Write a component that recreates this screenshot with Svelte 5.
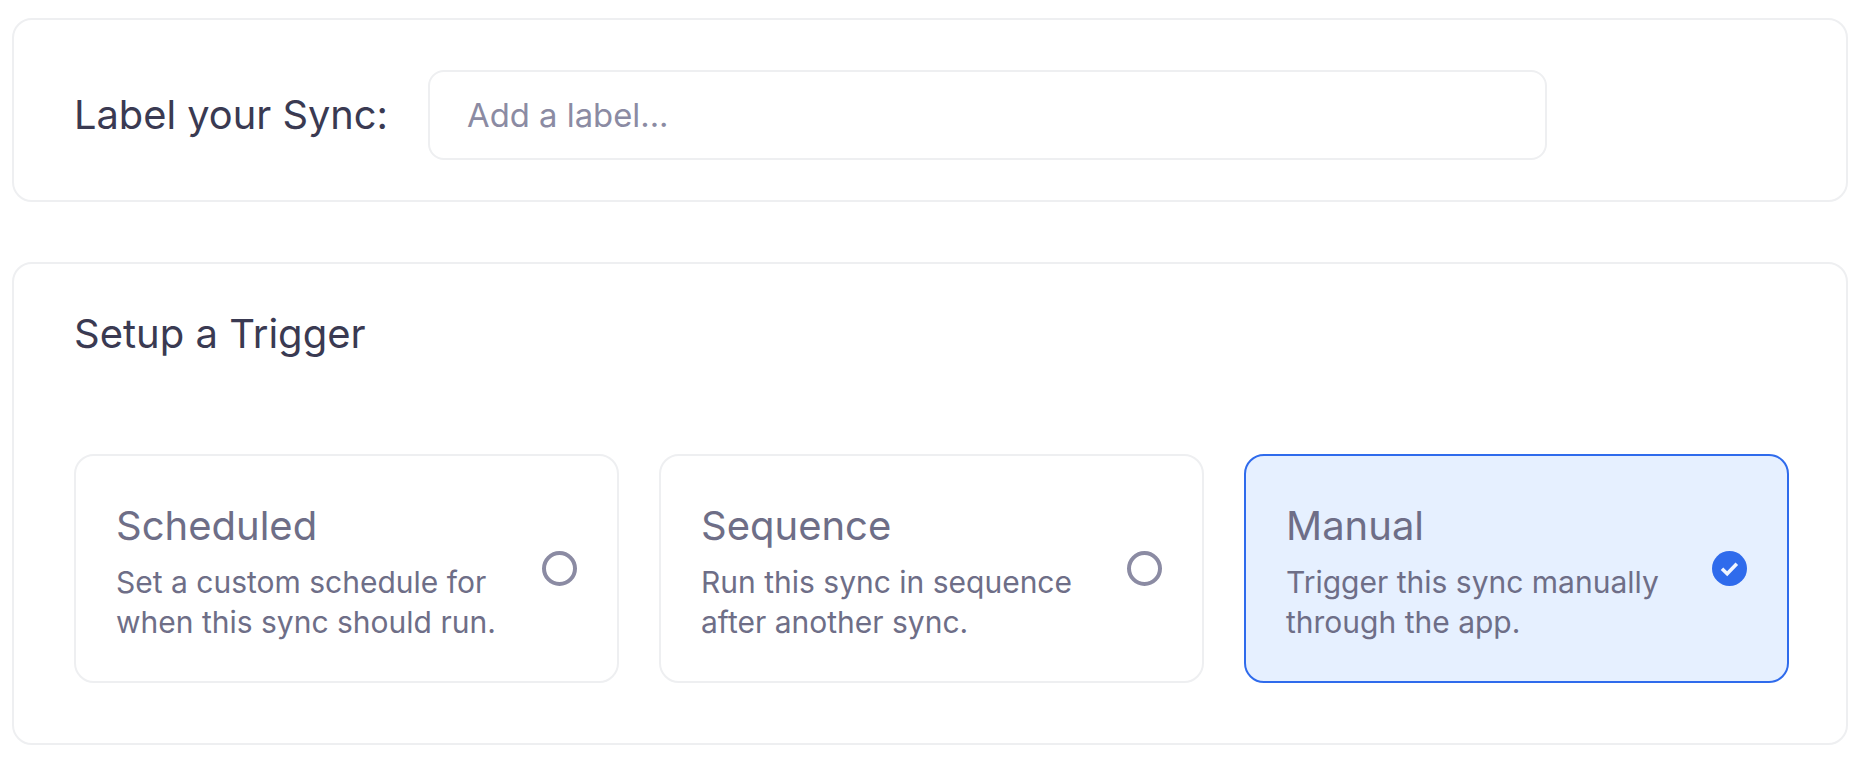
<script>
  const triggers = [
    { title: 'Scheduled', lines: ['Set a custom schedule for', 'when this sync should run.'], selected: false },
    { title: 'Sequence', lines: ['Run this sync in sequence', 'after another sync.'], selected: false },
    { title: 'Manual', lines: ['Trigger this sync manually', 'through the app.'], selected: true },
  ];
</script>

<div class="page">
  <section class="card label-card">
    <label class="label" for="sync-label">Label your Sync:</label>
    <input id="sync-label" class="input" placeholder="Add a label..." />
  </section>

  <section class="card trigger-card">
    <h2 class="title">Setup a Trigger</h2>
    <div class="options">
      {#each triggers as t}
        <div class="option" class:selected={t.selected}>
          <div class="text">
            <div class="name">{t.title}</div>
            <div class="desc">{t.lines[0]}<br />{t.lines[1]}</div>
          </div>
          {#if t.selected}
            <svg class="check" width="35" height="35" viewBox="0 0 35 35">
              <circle cx="17.5" cy="17.5" r="17.5" fill="#2f6bec" />
              <path d="M10 17.7l5.2 5 9.6-10" fill="none" stroke="#f0f5ff" stroke-width="3.6" stroke-linejoin="miter" />
            </svg>
          {:else}
            <span class="radio"></span>
          {/if}
        </div>
      {/each}
    </div>
  </section>
</div>

<style>
  :global(body) {
    margin: 0;
    background: #fff;
    font-family: Inter, 'Liberation Sans', sans-serif;
    font-weight: 370;
  }

  .page {
    display: flex;
    flex-direction: column;
    gap: 60px;
    padding: 18px 18px 0 12px;
  }

  .card {
    box-sizing: border-box;
    border: 2px solid #eeeff1;
    border-radius: 20px;
    background: #fff;
  }

  .label-card {
    display: flex;
    align-items: center;
    gap: 40px;
    height: 184px;
    padding: 50px 60px 40px;
  }

  .label {
    font-size: 39.8px;
    line-height: 50px;
    color: #3a3a52;
    white-space: nowrap;
  }

  .input {
    box-sizing: border-box;
    width: 1119px;
    height: 90px;
    padding: 0 37px;
    border: 2px solid #eeeff1;
    border-radius: 16px;
    outline: none;
    font-family: inherit;
    font-size: 32.8px;
    font-weight: inherit;
    color: #3a3a52;
  }

  .input::placeholder {
    color: #8b8ba3;
    opacity: 1;
  }

  .trigger-card {
    height: 483px;
    padding: 45px 57px 60px 60px;
  }

  .title {
    margin: 0 0 95px;
    font-size: 40px;
    line-height: 50px;
    font-weight: inherit;
    color: #3a3a52;
  }

  .options {
    display: grid;
    grid-template-columns: repeat(3, 1fr);
    gap: 40px;
  }

  .option {
    box-sizing: border-box;
    display: flex;
    align-items: center;
    justify-content: space-between;
    height: 229px;
    padding: 0 40px;
    border: 2px solid #eeeff1;
    border-radius: 20px;
  }

  .option.selected {
    background: #e6f0ff;
    border-color: #2f6bec;
  }

  .text {
    margin-top: 5px;
  }

  .name {
    font-size: 40px;
    line-height: 50px;
    color: #6e6e87;
  }

  .desc {
    margin-top: 11px;
    font-size: 30px;
    line-height: 40px;
    color: #6e6e87;
  }

  .radio {
    box-sizing: border-box;
    flex: none;
    width: 35px;
    height: 35px;
    border: 4px solid #8b8ba3;
    border-radius: 50%;
  }

  .check {
    flex: none;
  }
</style>
